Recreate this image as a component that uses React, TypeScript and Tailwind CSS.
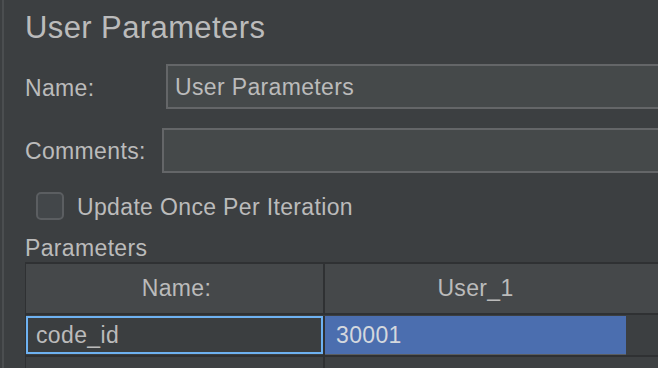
const gridLine = "bg-[#2f3133]";

export default function App() {
  return (
    <div className="flex h-[368px] w-[658px] overflow-hidden bg-[#3c3f41] font-['Liberation_Sans',Arial,sans-serif] text-[#bbbbbb]">
      <div className="ml-[2px] w-[2px] shrink-0 bg-[#4b4e50]" />
      <div className="flex min-w-0 flex-1 flex-col pl-[21px] tracking-[0.35px]">
        <div className="flex h-[54px] shrink-0 items-center whitespace-nowrap text-[31px] leading-none tracking-[0.4px]">
          User Parameters
        </div>

        <div className="mt-[10px] flex h-[45px] shrink-0 items-center">
          <span className="w-[141px] shrink-0 pt-[3px] text-[23px] leading-none">Name:</span>
          <div className="flex h-full flex-1 items-center whitespace-nowrap border-2 border-r-0 border-[#646668] bg-[#45494a] pl-[7px] pt-[2px] text-[23px] leading-none">
            User Parameters
          </div>
        </div>

        <div className="mt-[19px] flex h-[45px] shrink-0 items-center">
          <span className="w-[137px] shrink-0 pt-[2px] text-[23px] leading-none">Comments:</span>
          <div className="h-full flex-1 border-2 border-r-0 border-[#646668] bg-[#45494a]" />
        </div>

        <div className="mt-[19px] flex h-[28px] shrink-0 items-center pl-[11px]">
          <div className="h-[28px] w-[28px] shrink-0 rounded-[5px] border-2 border-[#5b5e61] bg-[#43474a]" />
          <span className="ml-[13px] whitespace-nowrap pt-[2px] text-[23px] leading-none">
            Update Once Per Iteration
          </span>
        </div>

        <div className="mt-[14px] flex h-[26px] shrink-0 items-center pt-[2px] text-[23px] leading-none">
          Parameters
        </div>

        <div className="mt-[2px] flex min-h-0 flex-1 flex-col border-l border-t-2 border-[#2f3133]">
          <div className="flex h-[49px] shrink-0 bg-[#45484a] text-[23px] leading-none">
            <div className="flex w-[297px] shrink-0 items-center justify-center pl-[4px]">Name:</div>
            <div className={`w-[2px] shrink-0 ${gridLine}`} />
            <div className="flex w-[301px] shrink-0 items-center justify-center">User_1</div>
            <div className="flex-1" />
          </div>
          <div className={`h-[2px] shrink-0 ${gridLine}`} />

          <div className="flex h-[40px] shrink-0 pt-[1px] text-[23px] leading-none">
            <div className="flex h-[38px] w-[297px] shrink-0 items-center border-2 border-[#6eb2f2] bg-[#3b3e40] pl-[8px]">
              code_id
            </div>
            <div className={`w-[2px] shrink-0 ${gridLine}`} />
            <div className="flex h-[40px] w-[301px] shrink-0 flex-col">
              <div className="flex h-[38px] items-center bg-[#4b6eaf] pl-[11px] text-[#d4d8de]">30001</div>
              <div className="h-[2px] bg-[#5a5d60]" />
            </div>
            <div className="flex-1" />
          </div>
          <div className={`h-[2px] shrink-0 ${gridLine}`} />

          <div className="flex flex-1 bg-[#3e4143]">
            <div className="w-[297px] shrink-0" />
            <div className={`w-[2px] shrink-0 ${gridLine}`} />
            <div className="flex-1" />
          </div>
        </div>
      </div>
    </div>
  );
}
